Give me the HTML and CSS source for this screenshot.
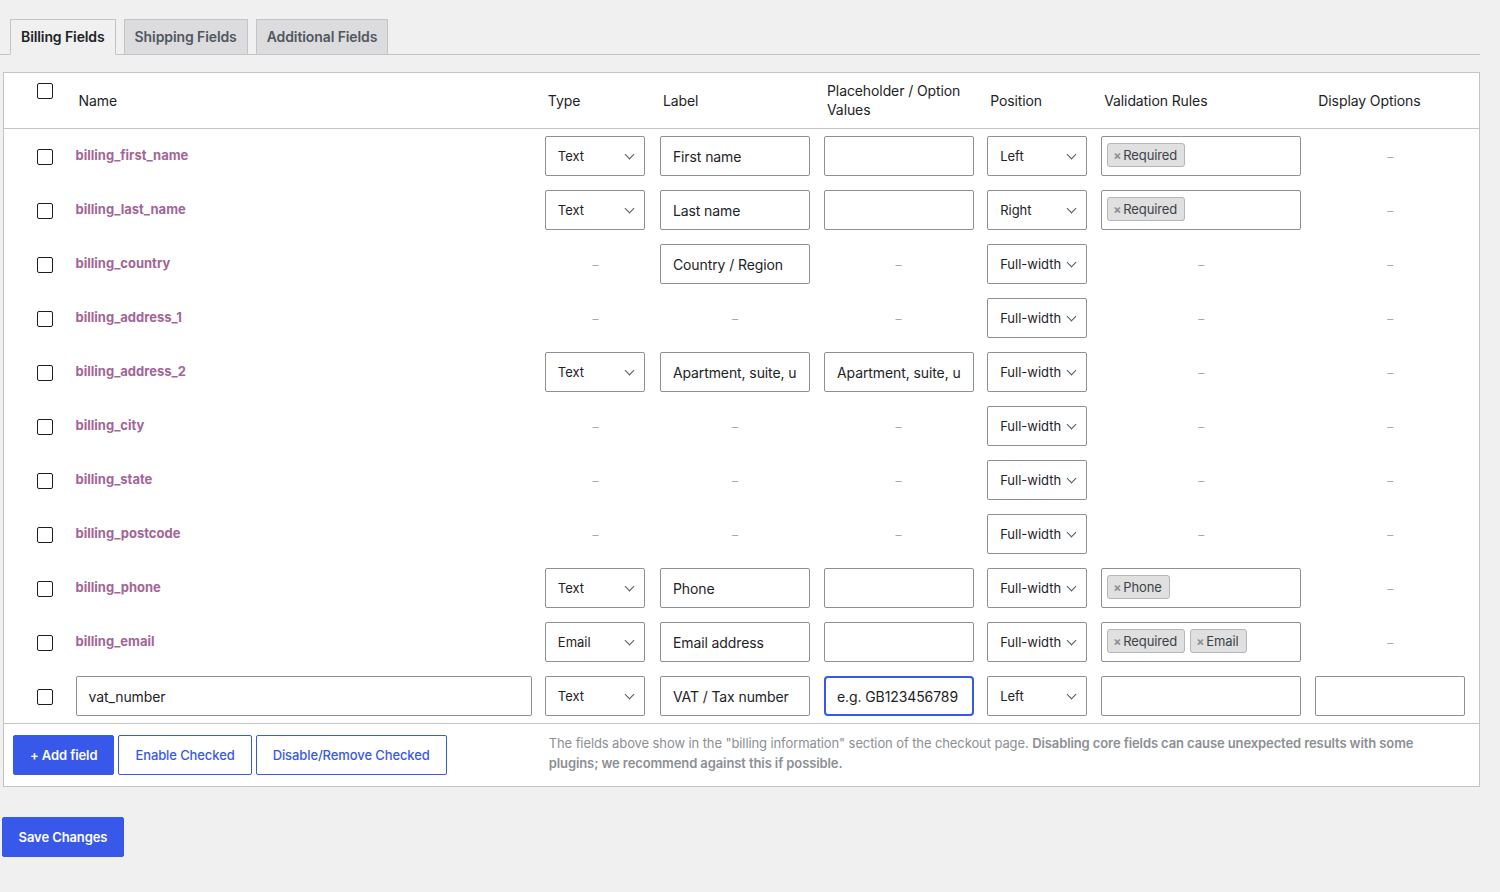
FILE: index.html
```html
<!DOCTYPE html>
<html>
<head>
  <title>Checkout Fields</title>
  <link rel="stylesheet" href="styles.css">
</head>
<body>
  <div class="wrap">
    <nav class="tabs">
      <a class="tab active">Billing Fields</a>
      <a class="tab">Shipping Fields</a>
      <a class="tab">Additional Fields</a>
    </nav>

    <table class="fields">
      <colgroup>
        <col class="c-check"><col class="c-name"><col class="c-type"><col class="c-label">
        <col class="c-ph"><col class="c-pos"><col class="c-valid"><col class="c-disp">
      </colgroup>
      <thead>
        <tr>
          <th class="check"><span class="cb"></span></th>
          <th>Name</th>
          <th>Type</th>
          <th>Label</th>
          <th>Placeholder / Option Values</th>
          <th>Position</th>
          <th>Validation Rules</th>
          <th>Display Options</th>
        </tr>
      </thead>
      <tbody>
        <tr>
          <td class="check"><span class="cb"></span></td>
          <td><a class="fname">billing_first_name</a></td>
          <td><div class="select">Text</div></td>
          <td><div class="input w150">First name</div></td>
          <td><div class="input w150"></div></td>
          <td><div class="select">Left</div></td>
          <td><div class="input w200 tags"><span class="tag"><i>×</i>Required</span></div></td>
          <td class="na">–</td>
        </tr>
        <tr>
          <td class="check"><span class="cb"></span></td>
          <td><a class="fname">billing_last_name</a></td>
          <td><div class="select">Text</div></td>
          <td><div class="input w150">Last name</div></td>
          <td><div class="input w150"></div></td>
          <td><div class="select">Right</div></td>
          <td><div class="input w200 tags"><span class="tag"><i>×</i>Required</span></div></td>
          <td class="na">–</td>
        </tr>
        <tr>
          <td class="check"><span class="cb"></span></td>
          <td><a class="fname">billing_country</a></td>
          <td class="na">–</td>
          <td><div class="input w150">Country / Region</div></td>
          <td class="na">–</td>
          <td><div class="select">Full-width</div></td>
          <td class="na">–</td>
          <td class="na">–</td>
        </tr>
        <tr>
          <td class="check"><span class="cb"></span></td>
          <td><a class="fname">billing_address_1</a></td>
          <td class="na">–</td>
          <td class="na">–</td>
          <td class="na">–</td>
          <td><div class="select">Full-width</div></td>
          <td class="na">–</td>
          <td class="na">–</td>
        </tr>
        <tr>
          <td class="check"><span class="cb"></span></td>
          <td><a class="fname">billing_address_2</a></td>
          <td><div class="select">Text</div></td>
          <td><div class="input w150"><span class="val">Apartment, suite, unit, etc.</span></div></td>
          <td><div class="input w150"><span class="val">Apartment, suite, unit, etc.</span></div></td>
          <td><div class="select">Full-width</div></td>
          <td class="na">–</td>
          <td class="na">–</td>
        </tr>
        <tr>
          <td class="check"><span class="cb"></span></td>
          <td><a class="fname">billing_city</a></td>
          <td class="na">–</td>
          <td class="na">–</td>
          <td class="na">–</td>
          <td><div class="select">Full-width</div></td>
          <td class="na">–</td>
          <td class="na">–</td>
        </tr>
        <tr>
          <td class="check"><span class="cb"></span></td>
          <td><a class="fname">billing_state</a></td>
          <td class="na">–</td>
          <td class="na">–</td>
          <td class="na">–</td>
          <td><div class="select">Full-width</div></td>
          <td class="na">–</td>
          <td class="na">–</td>
        </tr>
        <tr>
          <td class="check"><span class="cb"></span></td>
          <td><a class="fname">billing_postcode</a></td>
          <td class="na">–</td>
          <td class="na">–</td>
          <td class="na">–</td>
          <td><div class="select">Full-width</div></td>
          <td class="na">–</td>
          <td class="na">–</td>
        </tr>
        <tr>
          <td class="check"><span class="cb"></span></td>
          <td><a class="fname">billing_phone</a></td>
          <td><div class="select">Text</div></td>
          <td><div class="input w150">Phone</div></td>
          <td><div class="input w150"></div></td>
          <td><div class="select">Full-width</div></td>
          <td><div class="input w200 tags"><span class="tag"><i>×</i>Phone</span></div></td>
          <td class="na">–</td>
        </tr>
        <tr>
          <td class="check"><span class="cb"></span></td>
          <td><a class="fname">billing_email</a></td>
          <td><div class="select">Email</div></td>
          <td><div class="input w150">Email address</div></td>
          <td><div class="input w150"></div></td>
          <td><div class="select">Full-width</div></td>
          <td><div class="input w200 tags"><span class="tag"><i>×</i>Required</span><span class="tag"><i>×</i>Email</span></div></td>
          <td class="na">–</td>
        </tr>
        <tr>
          <td class="check"><span class="cb"></span></td>
          <td><div class="input w456">vat_number</div></td>
          <td><div class="select">Text</div></td>
          <td><div class="input w150">VAT / Tax number</div></td>
          <td><div class="input w150 focus">e.g. GB123456789</div></td>
          <td><div class="select">Left</div></td>
          <td><div class="input w200"></div></td>
          <td><div class="input w150"></div></td>
        </tr>
      </tbody>
      <tfoot>
        <tr>
          <td colspan="8">
            <div class="footer">
              <div class="actions">
                <button class="btn primary">+ Add field</button>
                <button class="btn outline">Enable Checked</button>
                <button class="btn outline">Disable/Remove Checked</button>
              </div>
              <p class="note">The fields above show in the "billing information" section of the checkout page. <strong>Disabling core fields can cause unexpected results with some plugins; we recommend against this if possible.</strong></p>
            </div>
          </td>
        </tr>
      </tfoot>
    </table>

    <button class="btn primary save">Save Changes</button>
  </div>
</body>
</html>
```

FILE: styles.css
```css
body {
  margin: 0;
  background: #f0f0f1;
  font-family: Inter, "Noto Sans", sans-serif;
  color: #1d2327;
  font-size: 14px;
}

.wrap {
  width: 1480px;
  padding-top: 19px;
}

.tabs {
  display: flex;
  gap: 8px;
  padding-left: 10px;
  border-bottom: 1px solid #c3c4c7;
  height: 35px;
  margin-bottom: 17px;
}

.tab {
  box-sizing: border-box;
  height: 36px;
  padding: 0 10px;
  line-height: 34px;
  font-size: 14px;
  font-weight: 600;
  color: #50575e;
  background: #dcdcde;
  border: 1px solid #c3c4c7;
  letter-spacing: -0.1px;
}

.tab.active {
  background: #f0f0f1;
  color: #1d2327;
  border-bottom-color: #f0f0f1;
}

.fields {
  margin-left: 3px;
  width: 1477px;
  table-layout: fixed;
  border-collapse: collapse;
  background: #fff;
  border: 1px solid #c3c4c7;
}

.c-check { width: 65px; }
.c-name { width: 469px; }
.c-type { width: 115px; }
.c-label { width: 164px; }
.c-ph { width: 163px; }
.c-pos { width: 114px; }
.c-valid { width: 214px; }
.c-disp { width: 171px; }

th {
  text-align: left;
  font-weight: 400;
  font-size: 14px;
  line-height: 19px;
  padding: 8px 10px 9px;
  height: 37px;
  border-bottom: 1px solid #c3c4c7;
  letter-spacing: -0.1px;
}

th.check {
  vertical-align: top;
  padding: 10px 0 0 33px;
}

td {
  padding: 7px;
  height: 40px;
  vertical-align: middle;
}

td.check {
  padding-left: 33px;
}

tbody td:last-child {
  padding-right: 14px;
}

.cb {
  display: block;
  box-sizing: border-box;
  width: 16px;
  height: 16px;
  border: 1px solid #1e1e1e;
  border-radius: 2px;
  background: #fff;
}

td.check .cb {
  margin-top: 1px;
}

.fname {
  display: block;
  margin-top: -2px;
  color: #a36597;
  font-weight: 700;
  font-size: 13px;
  letter-spacing: 0;
}

.na {
  text-align: center;
  color: #a7aaad;
  font-size: 12px;
}

.input,
.select {
  box-sizing: border-box;
  height: 40px;
  border: 1px solid #8c8f94;
  border-radius: 2px;
  background: #fff;
  white-space: nowrap;
  overflow: hidden;
  display: flex;
  align-items: center;
}

.input {
  padding: 0 12px;
  font-size: 14px;
  letter-spacing: -0.1px;
}

.input .val {
  overflow: hidden;
  min-width: 0;
}

.w150 { width: 150px; }
.w200 { width: 200px; }
.w456 { width: 456px; }

.select {
  width: 100px;
  padding: 0 12px;
  font-size: 13px;
  position: relative;
}

.select::after {
  content: "";
  position: absolute;
  right: 11px;
  top: 14px;
  width: 6px;
  height: 6px;
  border-right: 1px solid #50575e;
  border-bottom: 1px solid #50575e;
  transform: rotate(45deg);
}

.input.focus {
  border: 2px solid #3858e9;
  border-radius: 4px;
  padding: 0 11px;
}

.input.tags {
  align-items: flex-start;
  padding: 6px 5px;
  gap: 5px;
}

.tag {
  display: inline-flex;
  align-items: center;
  height: 24px;
  box-sizing: border-box;
  padding: 0 7px 0 5px;
  background: #e0e0e0;
  border: 1px solid #b4b6b9;
  border-radius: 3px;
  font-size: 13px;
  color: #3c434a;
}

.tag i {
  font-style: normal;
  color: #8c8f94;
  font-size: 12px;
  font-weight: 700;
  margin-right: 2px;
}

tfoot td {
  border-top: 1px solid #c3c4c7;
  padding: 11px 10px 11px 9px;
  height: auto;
}

.footer {
  display: flex;
  align-items: flex-start;
  gap: 102px;
}

.actions {
  display: flex;
  gap: 4px;
  flex-shrink: 0;
}

.btn {
  box-sizing: border-box;
  height: 40px;
  padding: 0 16px;
  border-radius: 2px;
  font-family: Inter, "Noto Sans", sans-serif;
  font-size: 13px;
  font-weight: 600;
  white-space: nowrap;
  cursor: pointer;
  letter-spacing: -0.1px;
}

.btn.primary {
  background: #3858e9;
  border: 1px solid #3858e9;
  color: #fff;
}

.btn.outline {
  background: #fff;
  border: 1px solid #3858e9;
  color: #3858e9;
  font-weight: 500;
}

.note {
  margin: -2px 0 0;
  max-width: 880px;
  font-size: 13px;
  line-height: 20px;
  color: #8c8f94;
  letter-spacing: -0.1px;
}

.note strong {
  font-weight: 600;
}

.save {
  margin: 30px 0 0 2px;
  width: 122px;
  padding: 0;
}
```
